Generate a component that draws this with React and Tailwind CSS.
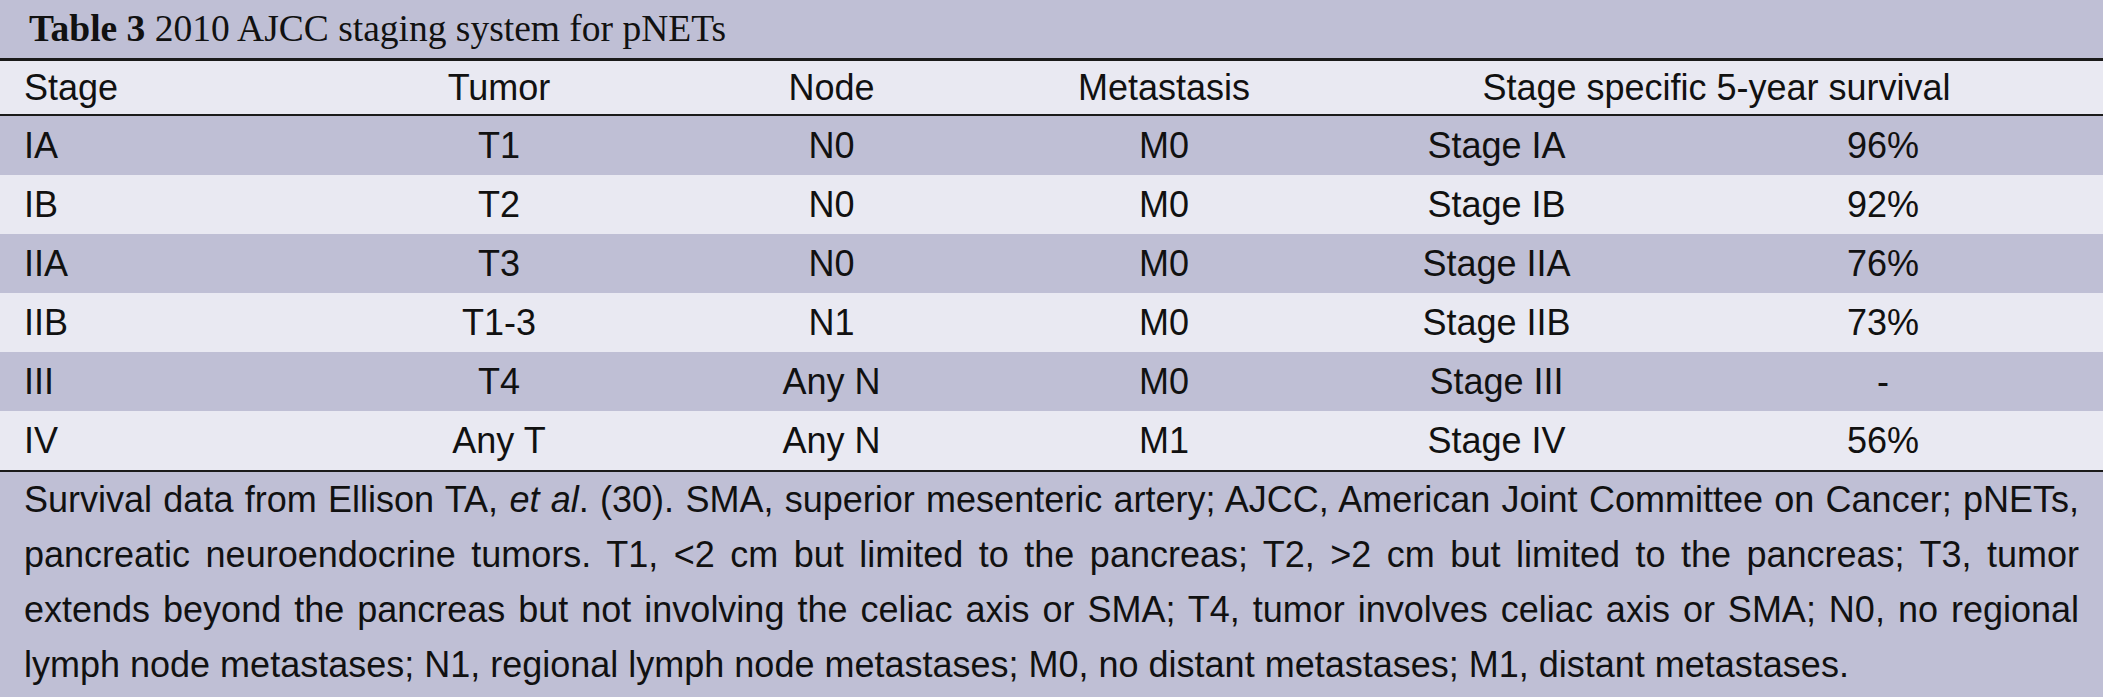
import React from "react";

const rows = [
    ["IA", "T1", "N0", "M0", "Stage IA", "96%"],
    ["IB", "T2", "N0", "M0", "Stage IB", "92%"],
    ["IIA", "T3", "N0", "M0", "Stage IIA", "76%"],
    ["IIB", "T1-3", "N1", "M0", "Stage IIB", "73%"],
    ["III", "T4", "Any N", "M0", "Stage III", "-"],
    ["IV", "Any T", "Any N", "M1", "Stage IV", "56%"],
];

const cols = "grid grid-cols-[333px_332px_333px_332px_333px_1fr] items-center";

function App() {
    return (
        <div className="w-[2103px] h-[697px] bg-[#bfbfd5] text-[#111] font-['Liberation_Sans',Arial,sans-serif]">
            <div className="h-[58px] pl-[29px] leading-[58px] text-[37.5px] font-['Liberation_Serif','Times_New_Roman',serif]">
                <span className="font-bold">Table 3</span> 2010 AJCC staging system for pNETs
            </div>

            <div className={`${cols} h-[58px] bg-[#e9e9f2] border-t-[3px] border-b-2 border-[#1a1a1a] text-[36px]`}>
                <div className="pl-[24px]">Stage</div>
                <div className="text-center">Tumor</div>
                <div className="text-center">Node</div>
                <div className="text-center">Metastasis</div>
                <div className="col-span-2 text-center">Stage specific 5-year survival</div>
            </div>

            {rows.map((r, i) => (
                <div
                    key={r[0]}
                    className={`${cols} h-[59px] text-[36px] ${i % 2 === 0 ? "bg-[#bfbfd5]" : "bg-[#e9e9f2]"}`}
                >
                    <div className="pl-[24px]">{r[0]}</div>
                    <div className="text-center">{r[1]}</div>
                    <div className="text-center">{r[2]}</div>
                    <div className="text-center">{r[3]}</div>
                    <div className="text-center">{r[4]}</div>
                    <div className="text-center">{r[5]}</div>
                </div>
            ))}

            <div className="border-t-2 border-[#1a1a1a] px-[24px] text-[36px] leading-[55px]">
                <div className="whitespace-nowrap text-justify [text-align-last:justify]">
                    Survival data from Ellison TA, <i>et al</i>. (30). SMA, superior mesenteric artery; AJCC, American Joint Committee on Cancer; pNETs,
                </div>
                <div className="whitespace-nowrap text-justify [text-align-last:justify]">
                    pancreatic neuroendocrine tumors. T1, &lt;2 cm but limited to the pancreas; T2, &gt;2 cm but limited to the pancreas; T3, tumor
                </div>
                <div className="whitespace-nowrap text-justify [text-align-last:justify]">
                    extends beyond the pancreas but not involving the celiac axis or SMA; T4, tumor involves celiac axis or SMA; N0, no regional
                </div>
                <div className="whitespace-nowrap">
                    lymph node metastases; N1, regional lymph node metastases; M0, no distant metastases; M1, distant metastases.
                </div>
            </div>
        </div>
    );
}

export default App;
